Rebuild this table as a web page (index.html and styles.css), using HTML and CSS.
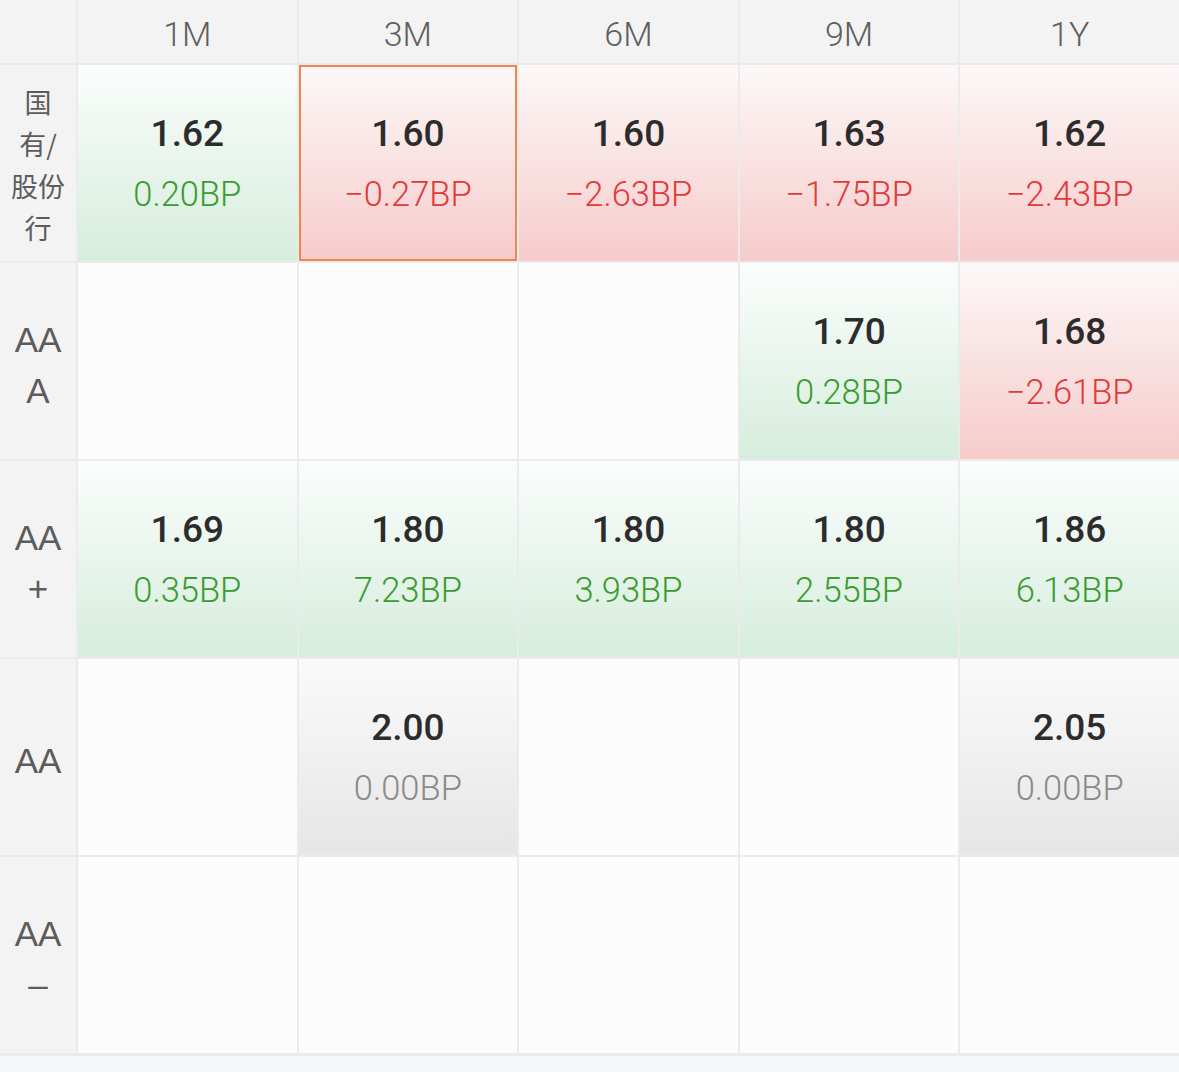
FILE: index.html
```html
<!DOCTYPE html>
<html lang="zh">
<head>
<meta charset="utf-8">
<title>收益率矩阵</title>
<link rel="stylesheet" href="styles.css">
</head>
<body>
<div class="matrix">
  <div class="corner"></div>
  <div class="head">1M</div>
  <div class="head">3M</div>
  <div class="head">6M</div>
  <div class="head">9M</div>
  <div class="head">1Y</div>

  <div class="label label-cn">国<br>有/<br>股份<br>行</div>
  <div class="cell up"><span class="rate">1.62</span><span class="bp">0.20BP</span></div>
  <div class="cell down selected"><span class="rate">1.60</span><span class="bp">−0.27BP</span></div>
  <div class="cell down"><span class="rate">1.60</span><span class="bp">−2.63BP</span></div>
  <div class="cell down"><span class="rate">1.63</span><span class="bp">−1.75BP</span></div>
  <div class="cell down"><span class="rate">1.62</span><span class="bp">−2.43BP</span></div>

  <div class="label">AA<br>A</div>
  <div class="cell"></div>
  <div class="cell"></div>
  <div class="cell"></div>
  <div class="cell up"><span class="rate">1.70</span><span class="bp">0.28BP</span></div>
  <div class="cell down"><span class="rate">1.68</span><span class="bp">−2.61BP</span></div>

  <div class="label">AA<br>+</div>
  <div class="cell up"><span class="rate">1.69</span><span class="bp">0.35BP</span></div>
  <div class="cell up"><span class="rate">1.80</span><span class="bp">7.23BP</span></div>
  <div class="cell up"><span class="rate">1.80</span><span class="bp">3.93BP</span></div>
  <div class="cell up"><span class="rate">1.80</span><span class="bp">2.55BP</span></div>
  <div class="cell up"><span class="rate">1.86</span><span class="bp">6.13BP</span></div>

  <div class="label">AA</div>
  <div class="cell"></div>
  <div class="cell flat"><span class="rate">2.00</span><span class="bp">0.00BP</span></div>
  <div class="cell"></div>
  <div class="cell"></div>
  <div class="cell flat"><span class="rate">2.05</span><span class="bp">0.00BP</span></div>

  <div class="label">AA<br>–</div>
  <div class="cell"></div>
  <div class="cell"></div>
  <div class="cell"></div>
  <div class="cell"></div>
  <div class="cell"></div>
</div>
</body>
</html>
```

FILE: styles.css
```css
html, body {
  margin: 0;
  padding: 0;
  background: #f5f6f8;
}

body {
  font-family: "Liberation Sans", "Noto Sans CJK SC", sans-serif;
}

.matrix {
  display: grid;
  grid-template-columns: 76px repeat(5, 1fr);
  grid-template-rows: 63px repeat(5, 196px);
  gap: 2px;
  padding-bottom: 3px;
  background: #ebebeb;
}

.corner,
.head {
  background: #f3f3f3;
}

.head {
  display: flex;
  align-items: center;
  justify-content: center;
  padding-top: 4px;
  font-family: "Roboto", "Liberation Sans", sans-serif;
  font-weight: 300;
  font-size: 34px;
  color: #5f5f5f;
}

.label {
  background: #f3f3f3;
  display: flex;
  align-items: center;
  justify-content: center;
  text-align: center;
  padding-top: 7px;
  font-family: "Liberation Sans", sans-serif;
  font-size: 35px;
  line-height: 51px;
  color: #5c5c5c;
}

.label-cn {
  font-family: "Noto Sans CJK SC", sans-serif;
  font-size: 27px;
  line-height: 42px;
  padding-top: 4px;
}

.cell {
  background: #fcfcfc;
  display: flex;
  flex-direction: column;
  align-items: center;
  justify-content: center;
  gap: 16px;
  padding-top: 2px;
}

.cell.up {
  background: linear-gradient(to bottom, #fbfdfc 0%, #d6eddd 100%);
}

.cell.down {
  background: linear-gradient(to bottom, #fdf8f8 0%, #f6cbcb 100%);
}

.cell.flat {
  background: linear-gradient(to bottom, #fafafa 0%, #e6e6e6 100%);
}

.cell.selected {
  box-shadow: inset 0 0 0 2px #e9894f;
}

.rate {
  font-family: "Roboto", "Liberation Sans", sans-serif;
  font-weight: 500;
  font-size: 37px;
  line-height: 44px;
  color: #2c2c2c;
}

.bp {
  font-family: "Roboto", "Liberation Sans", sans-serif;
  font-weight: 300;
  font-size: 34.5px;
  line-height: 44px;
}

.up .bp {
  color: #3a9c30;
}

.down .bp {
  color: #e03a3a;
}

.flat .bp {
  color: #8a8a8a;
}
```
